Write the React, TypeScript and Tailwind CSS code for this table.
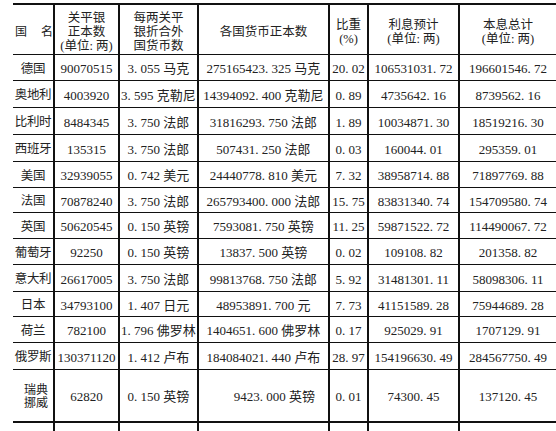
// 关平银折合各国货币表 (截图复刻)

const ROWS = [
  { name: "德国", taels: "90070515", rate: "3. 055 马克", amount: "275165423. 325 马克", share: "20. 02", interest: "106531031. 72", total: "196601546. 72", h: "h-[26px]" },
  { name: "奥地利", taels: "4003920", rate: "3. 595 克勒尼", amount: "14394092. 400 克勒尼", share: "0. 89", interest: "4735642. 16", total: "8739562. 16", h: "h-[27px]" },
  { name: "比利时", taels: "8484345", rate: "3. 750 法郎", amount: "31816293. 750 法郎", share: "1. 89", interest: "10034871. 30", total: "18519216. 30", h: "h-[27px]" },
  { name: "西班牙", taels: "135315", rate: "3. 750 法郎", amount: "507431. 250 法郎", share: "0. 03", interest: "160044. 01", total: "295359. 01", h: "h-[27px]" },
  { name: "美国", taels: "32939055", rate: "0. 742 美元", amount: "24440778. 810 美元", share: "7. 32", interest: "38958714. 88", total: "71897769. 88", h: "h-[26px]" },
  { name: "法国", taels: "70878240", rate: "3. 750 法郎", amount: "265793400. 000 法郎", share: "15. 75", interest: "83831340. 74", total: "154709580. 74", h: "h-[25px]" },
  { name: "英国", taels: "50620545", rate: "0. 150 英镑", amount: "7593081. 750 英镑", share: "11. 25", interest: "59871522. 72", total: "114490067. 72", h: "h-[26px]" },
  { name: "葡萄牙", taels: "92250", rate: "0. 150 英镑", amount: "13837. 500 英镑", share: "0. 02", interest: "109108. 82", total: "201358. 82", h: "h-[26px]" },
  { name: "意大利", taels: "26617005", rate: "3. 750 法郎", amount: "99813768. 750 法郎", share: "5. 92", interest: "31481301. 11", total: "58098306. 11", h: "h-[27px]" },
  { name: "日本", taels: "34793100", rate: "1. 407 日元", amount: "48953891. 700 元", share: "7. 73", interest: "41151589. 28", total: "75944689. 28", h: "h-[25px]" },
  { name: "荷兰", taels: "782100", rate: "1. 796 佛罗林", amount: "1404651. 600 佛罗林", share: "0. 17", interest: "925029. 91", total: "1707129. 91", h: "h-[26px]" },
  { name: "俄罗斯", taels: "130371120", rate: "1. 412 卢布", amount: "184084021. 440 卢布", share: "28. 97", interest: "154196630. 49", total: "284567750. 49", h: "h-[27px]" },
];

const GRID = "grid grid-cols-[40px_65px_79px_131px_39px_91px_98px]";
const CELL = "flex items-center justify-center whitespace-nowrap border-l-2 border-[#111]";

function HeaderCell({ lines, first }: { lines: string[]; first?: boolean }) {
  return (
    <div className={`flex flex-col items-center justify-center pt-[5px] leading-[14px] text-[12.5px] ${first ? "" : "border-l-2 border-[#111]"}`}>
      {lines.map((l) => (
        <span key={l}>{l}</span>
      ))}
    </div>
  );
}

export default function App() {
  return (
    <div
      className="h-[431px] w-[556px] overflow-hidden bg-white pl-[13px] pt-[3px] text-[#222]"
      style={{ fontFamily: '"Liberation Serif", "Noto Sans CJK SC", serif' }}
    >
      {/* header */}
      <div className={`${GRID} h-[52px] border-t-2 border-b border-[#111]`}>
        <div className="flex items-center justify-between pt-[5px] pl-[2px] text-[12px]">
          <span>国</span>
          <span>名</span>
        </div>
        <HeaderCell lines={["关平银", "正本数", "(单位: 两)"]} />
        <HeaderCell lines={["每两关平", "银折合外", "国货币数"]} />
        <HeaderCell lines={["各国货币正本数"]} />
        <HeaderCell lines={["比重", "(%)"]} />
        <HeaderCell lines={["利息预计", "(单位: 两)"]} />
        <HeaderCell lines={["本息总计", "(单位: 两)"]} />
      </div>

      {/* body */}
      {ROWS.map((r) => (
        <div key={r.name} className={`${GRID} ${r.h} border-b border-[#111] text-[13px]`}>
          <div className="flex items-center justify-center whitespace-nowrap pt-[3px] text-[12.5px] tracking-[-0.3px]">
            {r.name}
          </div>
          <div className={`${CELL} pt-[3px]`}>{r.taels}</div>
          <div className={`${CELL} pt-[3px]`}>{r.rate}</div>
          <div className={`${CELL} pt-[3px]`}>{r.amount}</div>
          <div className={`${CELL} pt-[3px]`}>{r.share}</div>
          <div className={`${CELL} pt-[3px]`}>{r.interest}</div>
          <div className={`${CELL} pt-[3px]`}>{r.total}</div>
        </div>
      ))}

      <div className={`${GRID} h-[53px] border-b-2 border-[#111] text-[13px]`}>
        <div className="flex flex-col items-center justify-center pt-[3px] pl-[6px] leading-[13px] text-[12px]">
          <span>瑞典</span>
          <span>挪威</span>
        </div>
        <div className={`${CELL} pt-[3px]`}>62820</div>
        <div className={`${CELL} pt-[3px]`}>0. 150 英镑</div>
        <div className={`${CELL} pt-[3px] pl-[22px]`}>9423. 000 英镑</div>
        <div className={`${CELL} pt-[3px]`}>0. 01</div>
        <div className={`${CELL} pt-[3px]`}>74300. 45</div>
        <div className={`${CELL} pt-[3px]`}>137120. 45</div>
      </div>

      <div className={`${GRID} h-[20px]`}>
        <div />
        <div className={CELL} />
        <div className={CELL} />
        <div className={CELL} />
        <div className={CELL} />
        <div className={CELL} />
        <div className={CELL} />
      </div>
    </div>
  );
}
